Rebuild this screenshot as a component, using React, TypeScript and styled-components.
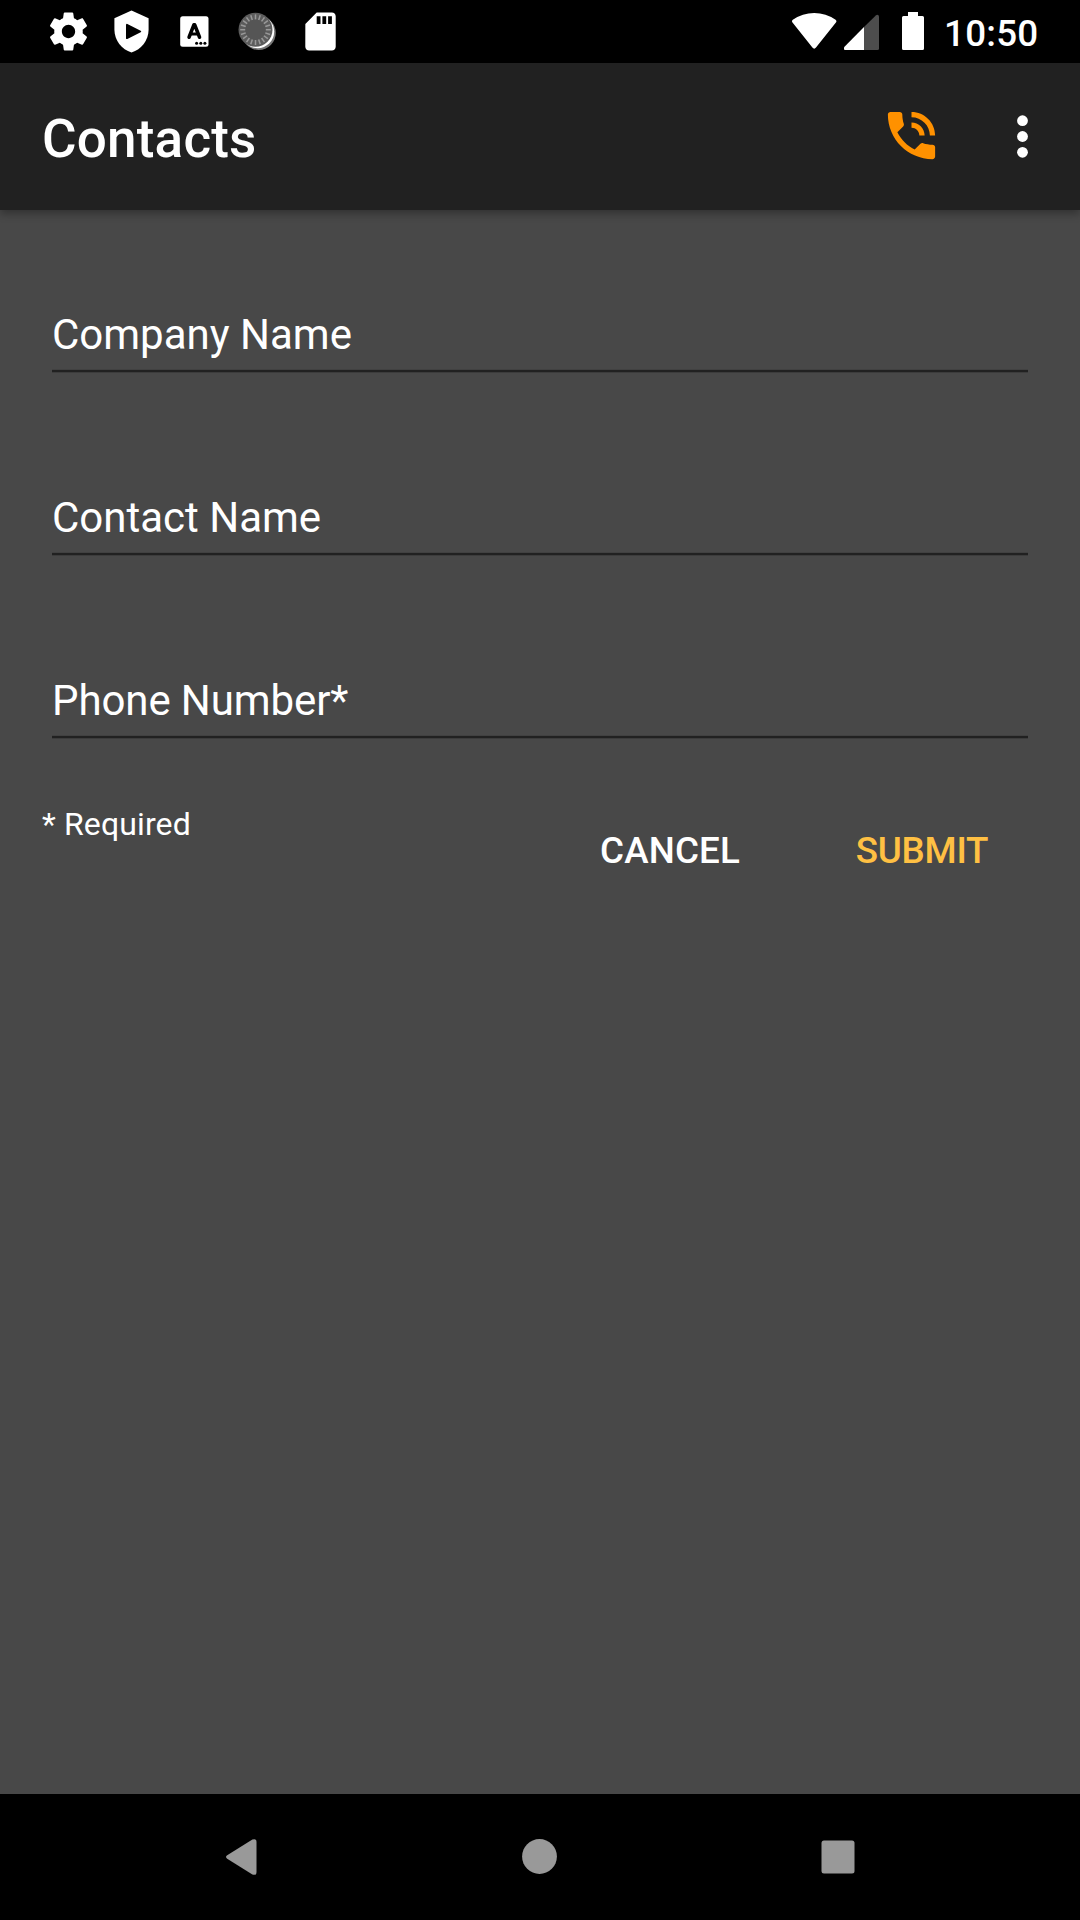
import React from "react";
import styled, { createGlobalStyle } from "styled-components";

const GlobalStyle = createGlobalStyle`
  body {
    margin: 0;
    background: #484848;
  }
`;

const Screen = styled.div`
  display: flex;
  flex-direction: column;
  width: 1080px;
  height: 1920px;
  overflow: hidden;
  background: #484848;
  color: #fff;
  font-family: Roboto, "Noto Sans", sans-serif;
`;

const StatusBar = styled.header`
  display: flex;
  flex: none;
  justify-content: space-between;
  height: 63px;
  box-sizing: border-box;
  padding: 0 42px 0 37px;
  background: #000;
`;

const Notifications = styled.div`
  display: flex;
  align-items: center;
`;

const NotificationIcon = styled.svg`
  display: block;
  width: 63px;
  height: 63px;
`;

const SystemStatus = styled.div`
  display: flex;
  align-items: flex-start;
  gap: 8px;
`;

const StatusGlyphs = styled.svg`
  display: block;
  width: 148px;
  height: 63px;
`;

const Clock = styled.span`
  width: 94px;
  font-size: 36.75px;
  font-weight: 500;
  line-height: 67px;
  letter-spacing: 0.25px;
  white-space: nowrap;
`;

const Toolbar = styled.div`
  display: flex;
  flex: none;
  align-items: center;
  height: 147px;
  box-sizing: border-box;
  padding: 0 26px 0 42px;
  background: #212121;
  box-shadow: 0 4px 8px rgba(0, 0, 0, 0.3);
`;

const Title = styled.h1`
  flex: 1;
  margin: 5px 0 0;
  font-size: 53px;
  font-weight: 500;
  line-height: 62px;
  letter-spacing: 0.2px;
`;

const ActionButton = styled.button<{ $gap?: number; $lift?: number }>`
  display: block;
  width: 63px;
  height: 63px;
  margin: 0 ${(p) => p.$gap ?? 0}px ${(p) => p.$lift ?? 0}px 0;
  padding: 0;
  border: 0;
  background: none;

  svg {
    display: block;
    width: 63px;
    height: 63px;
  }
`;

const Form = styled.main`
  flex: 1;
  padding: 101px 42px 0;
`;

const Field = styled.label`
  display: block;
  height: 183px;
  padding: 0 10px;
`;

const FieldText = styled.span<{ $tracking: number }>`
  display: block;
  height: 58px;
  font-size: 42px;
  line-height: 48px;
  letter-spacing: ${(p) => p.$tracking}px;
`;

const Underline = styled.span`
  display: block;
  height: 2px;
  background: #212121;
  border-top: 1px solid #414141;
  border-bottom: 1px solid #3c3c3c;
`;

const FormFooter = styled.div`
  display: flex;
  align-items: flex-start;
  margin-top: -73px;
`;

const Required = styled.span`
  flex: 1;
  padding-top: 18px;
  font-size: 32px;
  line-height: 38px;
  letter-spacing: 0.13px;
`;

const FormButton = styled.button<{ $color: string; $tracking: number }>`
  width: 231px;
  height: 126px;
  box-sizing: border-box;
  margin-left: 21px;
  padding: 2px 1px 0 0;
  border: 0;
  background: none;
  color: ${(p) => p.$color};
  font: 500 36.75px/124px Roboto, "Noto Sans", sans-serif;
  letter-spacing: ${(p) => p.$tracking}px;
  text-align: center;
`;

const NavigationBar = styled.nav`
  display: flex;
  flex: none;
  height: 126px;
  justify-content: center;
  background: #000;
`;

const NavButton = styled.svg`
  display: block;
  width: 298px;
  height: 126px;
  fill: #999;
`;

const fields = [
  { name: "Company Name", tracking: 0 },
  { name: "Contact Name", tracking: 0 },
  { name: "Phone Number*", tracking: -0.1 },
];

const GearIcon = () => (
  <NotificationIcon viewBox="0 0 63 63">
    <g transform="translate(8.7 8.7) scale(1.9)">
      <path
        fill="#fff"
        d="M19.43 12.98c.04-.32.07-.64.07-.98s-.03-.66-.07-.98l2.11-1.65c.19-.15.24-.42.12-.64l-2-3.46c-.12-.22-.39-.3-.61-.22l-2.49 1c-.52-.4-1.08-.73-1.69-.98l-.38-2.65C14.46 2.18 14.25 2 14 2h-4c-.25 0-.46.18-.49.42l-.38 2.65c-.61.25-1.17.59-1.69.98l-2.49-1c-.23-.09-.49 0-.61.22l-2 3.46c-.13.22-.07.49.12.64l2.11 1.65c-.04.32-.07.65-.07.98s.03.66.07.98l-2.11 1.65c-.19.15-.24.42-.12.64l2 3.46c.12.22.39.3.61.22l2.49-1c.52.4 1.08.73 1.69.98l.38 2.65c.03.24.24.42.49.42h4c.25 0 .46-.18.49-.42l.38-2.65c.61-.25 1.17-.59 1.69-.98l2.49 1c.23.09.49 0 .61-.22l2-3.46c.12-.22.07-.49-.12-.64l-2.11-1.65zM12 15.5c-1.93 0-3.5-1.57-3.5-3.5s1.57-3.5 3.5-3.5 3.5 1.57 3.5 3.5-1.57 3.5-3.5 3.5z"
      />
    </g>
  </NotificationIcon>
);

const ShieldIcon = () => (
  <NotificationIcon viewBox="0 0 63 63">
    <g transform="translate(8.7 8.7) scale(1.9)">
      <path
        fill="#fff"
        d="M12 1 3 5v6c0 5.55 3.84 10.74 9 12 5.16-1.26 9-6.45 9-12V5z"
      />
      <path
        d="M9.6 8.5v7l7-3.5z"
        stroke="#000"
        strokeWidth="1"
        strokeLinejoin="round"
      />
    </g>
  </NotificationIcon>
);

const KeyboardIcon = () => (
  <NotificationIcon viewBox="0 0 63 63">
    <rect x="17.2" y="16.2" width="28.3" height="30.6" rx="2.5" fill="#fff" />
    <path
      d="M26.1 37.2 30.9 24.9H31.7L36.5 37.2"
      fill="none"
      stroke="#000"
      strokeWidth="3.6"
      strokeLinecap="round"
      strokeLinejoin="round"
    />
    <path d="M28 34h6.6" stroke="#000" strokeWidth="3" />
    <circle cx="33.6" cy="43.2" r="1.5" />
    <circle cx="37.8" cy="43.2" r="1.5" />
    <circle cx="41.9" cy="43.2" r="1.5" />
  </NotificationIcon>
);

const SpinnerIcon = () => (
  <NotificationIcon viewBox="0 0 63 63">
    <circle cx="32.8" cy="33" r="17" fill="#777" />
    <circle cx="31.6" cy="31.6" r="16.6" fill="#fff" />
    <circle cx="29.5" cy="29.7" r="17" fill="#5c5c5c" />
    <circle cx="29.5" cy="29.7" r="10.5" fill="#555" />
    {Array.from({ length: 20 }, (_, i) => (
      <path
        key={i}
        d="M29.5 14.4v5"
        stroke="#999"
        strokeWidth="1.5"
        transform={`rotate(${i * 18} 29.5 29.7)`}
      />
    ))}
  </NotificationIcon>
);

const SdCardIcon = () => (
  <NotificationIcon viewBox="0 0 63 63">
    <g transform="translate(8.7 8.7) scale(1.9)">
      <path
        fill="#fff"
        d="M18 2h-8L4.02 8 4 20c0 1.1.9 2 2 2h12c1.1 0 2-.9 2-2V4c0-1.1-.9-2-2-2zm-6 6h-2V4h2v4zm3 0h-2V4h2v4zm3 0h-2V4h2v4z"
      />
    </g>
  </NotificationIcon>
);

export default function App() {
  return (
    <>
      <GlobalStyle />
      <Screen>
        <StatusBar>
          <Notifications>
            <GearIcon />
            <ShieldIcon />
            <KeyboardIcon />
            <SpinnerIcon />
            <SdCardIcon />
          </Notifications>
          <SystemStatus>
            <StatusGlyphs viewBox="788 0 148 63" fill="#fff">
              <path d="M792.3 22.3Q791.2 20.8 792.8 19.8Q802.5 13 814.2 13Q826 13 835.6 19.8Q837.2 20.8 836.1 22.3L816 47.5Q814.2 49.8 812.4 47.5Z" />
              <path
                fill="#4d4d4d"
                d="M864 27 875.8 15.4Q877.2 14.3 878.5 15.2L879 16.5V48.5Q879 50 877.5 50H864Z"
              />
              <path d="M864 27V50H845Q844 50 844 49V47.2Z" />
              <path d="M908 12h10v4h4.5q1.5 0 1.5 1.5v31q0 1.5-1.5 1.5h-19q-1.5 0-1.5-1.5v-31q0-1.5 1.5-1.5h4.5z" />
            </StatusGlyphs>
            <Clock>10:50</Clock>
          </SystemStatus>
        </StatusBar>
        <Toolbar>
          <Title>Contacts</Title>
          <ActionButton $gap={48} $lift={2} aria-label="Call">
            <svg viewBox="0 0 24 24" fill="#ff9100">
              <path d="M20 15.5c-1.25 0-2.45-.2-3.57-.57-.35-.11-.74-.03-1.02.24l-2.2 2.2c-2.83-1.44-5.15-3.75-6.59-6.59l2.2-2.21c.28-.26.36-.65.25-1C8.7 6.45 8.5 5.25 8.5 4c0-.55-.45-1-1-1H4c-.55 0-1 .45-1 1 0 9.39 7.61 17 17 17 .55 0 1-.45 1-1v-3.5c0-.55-.45-1-1-1zM19 12h2c0-4.97-4.03-9-9-9v2c3.87 0 7 3.13 7 7zm-4 0h2c0-2.76-2.24-5-5-5v2c1.66 0 3 1.34 3 3z" />
            </svg>
          </ActionButton>
          <ActionButton aria-label="More options">
            <svg viewBox="0 0 63 63" fill="#fff">
              <circle cx="31.5" cy="15.7" r="5.4" />
              <circle cx="31.5" cy="31.5" r="5.4" />
              <circle cx="31.5" cy="47.3" r="5.4" />
            </svg>
          </ActionButton>
        </Toolbar>
        <Form>
          {fields.map(({ name, tracking }) => (
            <Field key={name}>
              <FieldText $tracking={tracking}>{name}</FieldText>
              <Underline />
            </Field>
          ))}
          <FormFooter>
            <Required>* Required</Required>
            <FormButton $color="#fff" $tracking={0.15}>
              CANCEL
            </FormButton>
            <FormButton $color="#ffc043" $tracking={-0.25}>
              SUBMIT
            </FormButton>
          </FormFooter>
        </Form>
        <NavigationBar>
          <NavButton viewBox="93 0 298 126">
            <path d="M227.2 64.7Q224.8 63 227.2 61.3L252.4 45.6Q256.5 44 256.5 48V78Q256.5 82 252.4 80.4Z" />
          </NavButton>
          <NavButton viewBox="391 0 298 126">
            <circle cx="539.5" cy="62.5" r="17.4" />
          </NavButton>
          <NavButton viewBox="689 0 298 126">
            <rect x="821.5" y="46.5" width="33" height="33" rx="2.5" />
          </NavButton>
        </NavigationBar>
      </Screen>
    </>
  );
}
